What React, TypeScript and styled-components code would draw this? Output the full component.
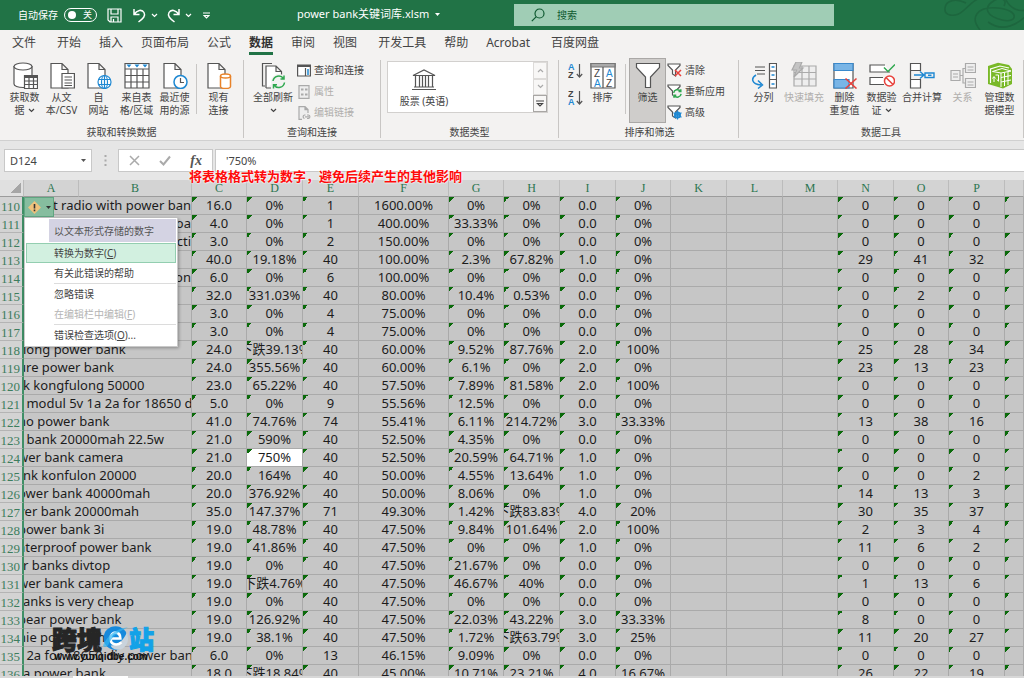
import React from "react";
import styled, { createGlobalStyle, css } from "styled-components";

const Global = createGlobalStyle`
  * { box-sizing: border-box; }
  body { margin: 0; background: #e6e6e6; font-family: "Noto Sans", "Noto Sans CJK SC", sans-serif; }
  button, input { font: inherit; color: inherit; border: 0; margin: 0; padding: 0; background: none; border-radius: 0; outline: none; }
`;

const Window = styled.div`
  height: 100vh;
  display: flex;
  flex-direction: column;
  overflow: hidden;
  color: #444;
  font-size: 10px;
  line-height: 13px;
`;

/* ---------- title bar ---------- */
const TitleBar = styled.header`
  flex: none;
  height: 30px;
  display: grid;
  grid-template-columns: 297px 217px 320px 1fr;
  align-items: center;
  background: #217346;
  color: #fff;
`;
const QuickAccess = styled.div`
  display: flex;
  align-items: center;
  padding-left: 18px;
`;
const Toggle = styled.button`
  width: 33px;
  height: 14px;
  margin: 0 10px 0 6px;
  padding: 0 4px 0 3px;
  display: flex;
  align-items: center;
  justify-content: space-between;
  border: 1px solid #fff;
  border-radius: 7px;
  font-size: 9px;
  line-height: 12px;
`;
const Knob = styled.span`
  width: 8px;
  height: 8px;
  border-radius: 50%;
  background: #fff;
`;
const QuickButton = styled.button<{ $gap?: number }>`
  display: flex;
  margin-right: ${(p) => p.$gap ?? 4}px;
`;
const FileName = styled.button`
  display: flex;
  align-items: center;
  gap: 6px;
  padding-bottom: 2px;
  font-size: 11px;
  line-height: 14px;
  white-space: nowrap;
`;
const Search = styled.label`
  height: 22px;
  display: flex;
  align-items: center;
  gap: 12px;
  padding-left: 17px;
  background: #a0cdb5;
  color: #0f5a31;
  input { flex: 1; min-width: 0; }
  input::placeholder { color: #0f5a31; opacity: 1; }
`;
const Swirl = styled.svg`
  justify-self: end;
  align-self: start;
`;

/* ---------- ribbon ---------- */
const Tabs = styled.nav`
  flex: none;
  height: 30px;
  display: flex;
  gap: 18px;
  padding-left: 12px;
  background: #f3f2f1;
`;
const Tab = styled.button<{ $active?: boolean; $wide?: boolean }>`
  height: 25px;
  padding-top: 1px;
  font-size: 12px;
  line-height: 24px;
  white-space: nowrap;
  border-bottom: 3px solid ${(p) => (p.$active ? "#217346" : "transparent")};
  font-weight: ${(p) => (p.$active ? 700 : 400)};
  color: ${(p) => (p.$active ? "#333" : "#444")};
  margin-right: ${(p) => (p.$wide ? 3 : 0)}px;
`;
const Ribbon = styled.section`
  flex: none;
  height: 81px;
  display: flex;
  background: #f3f2f1;
  border-bottom: 1px solid #d0d0d0;
`;
const Group = styled.div<{ $width?: number; $pad?: number }>`
  flex: ${(p) => (p.$width ? `0 0 ${p.$width}px` : "1 0 0")};
  height: 78px;
  padding-left: ${(p) => p.$pad ?? 6}px;
  display: flex;
  flex-direction: column;
  justify-content: space-between;
  border-right: 1px solid #c8c6c4;
`;
const Tools = styled.div`
  display: flex;
  align-items: flex-start;
`;
const GroupName = styled.div`
  text-align: center;
  margin-left: -6px;
  line-height: 12px;
`;
const BigButton = styled.button<{ $width?: number; $dim?: boolean; $pressed?: boolean }>`
  flex: 0 0 ${(p) => p.$width ?? 37}px;
  display: flex;
  flex-direction: column;
  align-items: center;
  padding-top: 2px;
  white-space: nowrap;
  color: ${(p) => (p.$dim ? "#b0aeac" : "#444")};
  ${(p) =>
    p.$pressed &&
    css`
      height: 65px;
      margin-top: -2px;
      padding-top: 3px;
      background: #cfcdcb;
      border: 1px solid #aaa8a6;
    `}
`;
const LabelLine = styled.span`
  display: flex;
  align-items: center;
  gap: 3px;
  min-height: 13px;
`;
const IconSlot = styled.span`
  display: flex;
  margin-bottom: 2px;
`;
const Rule = styled.div`
  width: 1px;
  height: 50px;
  margin: 4px 3px 0;
  background: #c8c6c4;
`;
const Stack = styled.div<{ $gap?: number }>`
  display: flex;
  flex-direction: column;
  gap: ${(p) => p.$gap ?? 6}px;
  padding: 3px 0 0 1px;
`;
const SmallButton = styled.button<{ $dim?: boolean }>`
  height: 15px;
  display: flex;
  align-items: center;
  gap: 3px;
  white-space: nowrap;
  color: ${(p) => (p.$dim ? "#b0aeac" : "#444")};
`;
const Gallery = styled.div`
  width: 161px;
  height: 52px;
  margin-top: 1px;
  display: flex;
  border: 1px solid #d2d0ce;
  background: #fff;
`;
const GalleryItem = styled.button`
  display: flex;
  flex-direction: column;
  align-items: center;
  gap: 4px;
  width: 72px;
  padding-top: 7px;
`;
const Scroller = styled.div`
  width: 14px;
  margin-left: auto;
  display: grid;
  grid-template-rows: 1fr 1fr 1fr;
`;
const ScrollButton = styled.button<{ $strong?: boolean }>`
  display: grid;
  place-items: center;
  background: #f8f7f6;
  border: 1px solid ${(p) => (p.$strong ? "#a8a6a4" : "#dddbd9")};
`;

/* ---------- formula bar ---------- */
const FormulaBar = styled.div`
  flex: none;
  height: 39px;
  padding: 8px 0 8px 4px;
  display: flex;
  font-size: 11px;
`;
const NameBox = styled.label`
  width: 88px;
  display: flex;
  align-items: center;
  padding: 0 5px;
  background: #fff;
  border: 1px solid #c8c8c8;
  input { flex: 1; min-width: 0; }
`;
const Dots = styled.div`
  width: 26px;
  display: grid;
  place-items: center;
`;
const FormulaActions = styled.div`
  width: 95px;
  display: flex;
  align-items: center;
  justify-content: space-between;
  padding: 0 10px;
  background: #fff;
  border: 1px solid #c8c8c8;
  button { display: flex; }
`;
const FxButton = styled.button`
  font-family: "Liberation Serif", serif;
  font-style: italic;
  font-weight: 700;
  font-size: 14px;
  color: #555;
`;
const FormulaInput = styled.input`
  flex: 1;
  min-width: 0;
  margin-left: 2px;
  padding-left: 10px;
  background: #fff;
  border: 1px solid #c8c8c8;
  border-right: 0;
`;

/* ---------- sheet ---------- */
const SheetArea = styled.main`
  position: relative;
  flex: 1;
  min-height: 0;
  display: flex;
  flex-direction: column;
`;
const SheetView = styled.div`
  flex: 1;
  min-height: 0;
  overflow: hidden;
  background: #c6c6c6;
`;
const Sheet = styled.table`
  width: 100%;
  table-layout: fixed;
  border-collapse: separate;
  border-spacing: 0;
  color: #1c1c1c;
`;
const ColumnHead = styled.th`
  height: 17px;
  padding: 1px 0 0;
  background: #d3d3d3;
  border-right: 1px solid #bcbcbc;
  border-bottom: 1px solid #9c9c9c;
  font: 12px/15px "Liberation Serif", serif;
  color: #2b7550;
`;
const Corner = styled(ColumnHead)`
  background: linear-gradient(135deg, transparent 50%, #a6a6a6 50%) 11px 3px / 10px 10px no-repeat, #e0e0e0;
`;
const RowHead = styled.th`
  height: 18px;
  padding: 3px 2px 0 0;
  text-align: right;
  background: #d3d3d3;
  border-right: 2px solid #3f8f66;
  border-bottom: 1px solid #b4b4b4;
  font: 13px/14px "Liberation Serif", serif;
  color: #3d7d5d;
`;
const Cell = styled.td<{ $flag?: boolean; $selected?: boolean }>`
  height: 18px;
  padding: 0;
  border-right: 1px solid #aaa;
  border-bottom: 1px solid #aaa;
  background: ${(p) => (p.$flag ? "linear-gradient(135deg, #0a6a0a 50%, transparent 50%) 0 0 / 5px 5px no-repeat," : "")}
    ${(p) => (p.$selected ? "#fff" : "#c6c6c6")};
`;
const Value = styled.div`
  height: 17px;
  display: flex;
  justify-content: center;
  overflow: hidden;
  white-space: pre;
  font-size: 13px;
  line-height: 17px;
`;
const Keyword = styled(Value)<{ $end?: boolean; $cut?: boolean }>`
  justify-content: ${(p) => (p.$end ? "flex-end" : "flex-start")};
  text-indent: ${(p) => (p.$cut ? -6 : -1)}px;
`;
const BottomEdge = styled.div`
  flex: none;
  height: 2px;
  padding-left: 73px;
  background: #d8d8d8;
  &::before { content: ""; display: block; width: 55px; height: 2px; background: #fff; }
`;

/* ---------- overlays ---------- */
const Note = styled.p`
  position: absolute;
  left: 189px;
  top: -13px;
  margin: 0;
  z-index: 2;
  font-size: 13px;
  line-height: 18px;
  font-weight: 700;
  color: #ff0a0a;
  white-space: nowrap;
  text-shadow: 0 0 2px #fff, 0 0 2px #fff;
`;
const ErrorFlag = styled.button`
  position: absolute;
  left: 24px;
  top: 17px;
  width: 30px;
  height: 20px;
  display: flex;
  align-items: center;
  justify-content: space-between;
  padding: 0 2px 0 3px;
  background: #86bd9f;
  border: 1px solid #5fa580;
`;
const Menu = styled.div`
  position: absolute;
  left: 24px;
  top: 38px;
  width: 154px;
  padding: 1px;
  background: #fff;
  border: 1px solid #c9c9c9;
  border-top: 0;
  box-shadow: 1px 1px 3px rgba(0, 0, 0, 0.3);
`;
const MenuTitle = styled.div`
  height: 23px;
  margin: 0 0 1px 23px;
  padding-left: 5px;
  line-height: 24px;
  background: #d4d3e3;
  color: #555;
`;
const MenuItem = styled.button<{ $hot?: boolean; $dim?: boolean }>`
  display: block;
  width: 100%;
  height: 20px;
  padding-left: 27px;
  text-align: left;
  border: 1px solid ${(p) => (p.$hot ? "#93ceb0" : "transparent")};
  background: ${(p) => (p.$hot ? "#d2f0e0" : "transparent")};
  color: ${(p) => (p.$dim ? "#b4b4b4" : "#444")};
`;
const MenuRule = styled.div`
  height: 1px;
  margin: 0 0 0 28px;
  background: #dcdcdc;
`;
const Watermark = styled.div`
  position: absolute;
  left: 52px;
  bottom: 15px;
  width: 102px;
  color: #262626;
  pointer-events: none;
`;
const Logo = styled.div`
  display: flex;
  align-items: center;
  height: 26px;
  font: 900 25px/26px "Noto Sans CJK SC", sans-serif;
  -webkit-text-stroke: 1px currentColor;
`;
const LogoEnd = styled.span`
  color: #12a2e8;
`;
const Site = styled.div`
  padding-right: 4px;
  text-align: center;
  font: 700 10px/12px "Liberation Sans", sans-serif;
  color: #111;
`;

/* ---------- drawings ---------- */
type Draw = { children: React.ReactNode; w?: number; h?: number; box?: string; color?: string };
const Icon = ({ children, w = 26, h = 27, box, color = "#555" }: Draw) => (
  <svg width={w} height={h} viewBox={box ?? `0 0 ${w} ${h}`} fill="none" stroke={color} strokeWidth="1.2" aria-hidden="true">
    {children}
  </svg>
);
const Chevron = ({ color = "#444", w = 7 }: { color?: string; w?: number }) => (
  <Icon w={w} h={5} box="0 0 7 5" color={color}><path d="M1 1l2.5 2.5L6 1" /></Icon>
);
const Caret = ({ color = "#555" }: { color?: string }) => (
  <svg width="5" height="3" viewBox="0 0 5 3" aria-hidden="true"><path d="M0 0h5L2.5 3z" fill={color} /></svg>
);
const Page = () => <path d="M2 1.5h11l6 6V26H2zM13 1.5v6h6" fill="#fff" />;

const GetData = () => (
  <Icon>
    <path d="M2 4v18c0 2 4 3.500 9 3.500h9V4" fill="#fff" />
    <ellipse cx="11" cy="4.500" rx="9" ry="3.500" fill="#fff" />
    <path d="M12.500 13.500h13v13h-13z" fill="#fff" />
    <path d="M12.500 14.500h13" strokeWidth="3" />
    <path d="M12.500 19h13M12.500 22.500h13M17 14v12M21.500 14v12" />
  </Icon>
);
const TextFile = () => (
  <Icon><Page /><path d="M13 11.500h12.400V26H13z" fill="#fff" /><path d="M15.500 15h7.500M15.500 18h7.500M15.500 21h7.500M15.500 23.500h7.500" /></Icon>
);
const WebFile = () => (
  <Icon>
    <Page />
    <g stroke="#1e88d2"><circle cx="18.500" cy="20" r="6.500" fill="#fff" /><ellipse cx="18.500" cy="20" rx="3" ry="6.500" /><path d="M12.500 17.500h12M12.500 22.500h12M18.500 13.500v13" /></g>
  </Icon>
);
const RangeIcon = () => (
  <Icon>
    <path d="M1 1.500h24V26H1z" fill="#fff" />
    <path d="M1 7h24M1 13.500h24M1 20h24M7 7v19M13 7v19M19 7v19" />
    <path d="M2.500 2.500h5L5 5.500zM10.500 2.500h5L13 5.500zM18.500 2.500h5L21 5.500z" fill="#1e88d2" stroke="none" />
  </Icon>
);
const RecentIcon = () => (
  <Icon><Page /><circle cx="18.500" cy="20" r="6.500" fill="#fff" stroke="#1e88d2" strokeWidth="1.500" /><path d="M18.500 16v4.500h3.500" /></Icon>
);
const ConnIcon = () => (
  <Icon><Page /><g stroke="#e8832a" strokeWidth="1.500" fill="#fff"><path d="M14.500 14v10.500c0 1.200 2 2 5 2s5-.8 5-2V14" /><ellipse cx="19.500" cy="14" rx="5" ry="2" /></g></Icon>
);
const RefreshArrows = ({ x = 0, y = 0, s = 1 }: { x?: number; y?: number; s?: number }) => (
  <g transform={`translate(${x} ${y}) scale(${s})`} stroke="#2fa84f" strokeWidth={1.5 / s}>
    <path d="M1 6a5.800 5.800 0 0 1 10.500-2.500M12 .5v3.500H8.500M12.500 7.500A5.800 5.800 0 0 1 2 10M1.500 13.500V9.800H5" />
  </g>
);
const RefreshIcon = () => (
  <Icon>
    <path d="M5 24H2.500V1.500H12" />
    <path d="M6 26V4h10l5.500 5.500V15M16 4v5.500h5.500M6 26h5" fill="#fff" />
    <circle cx="19" cy="20" r="8" fill="#f3f2f1" stroke="none" />
    <RefreshArrows x={12} y={13} />
  </Icon>
);
const PaneIcon = () => (
  <Icon w={14} h={13}><path d="M.6 1h12.800v11H.6z" fill="#fff" /><path d="M.6 2h12.800" strokeWidth="2" /><path d="M8.500 4v8" /><path d="M11 5v6" stroke="#1e88d2" strokeWidth="1.500" /></Icon>
);
const PropIcon = () => (
  <Icon w={14} h={14} color="#aaa"><path d="M2 .6h10v12.800H2z" fill="#eee" /><path d="M4 4.500h2.500M8 4.500h2.500M4 9.500h2.500M8 9.500h2.500" strokeWidth="2" /></Icon>
);
const LinkIcon = () => (
  <Icon w={14} h={14} color="#aaa"><path d="M5 13.400H2V.6h6l3 3V7M8 .6v3h3" fill="#eee" /><path d="M7.500 12.500a1.800 1.800 0 0 1 0-3.500h1M10 9h1.500a1.800 1.800 0 0 1 0 3.500H10M8 10.800h4" /></Icon>
);
const BankIcon = () => (
  <Icon w={26} h={22}>
    <path d="M2 6.500L13 1l11 5.500zM1 20.500h24M3 18h20M4.500 7v11M8.500 7v11M11.500 7v11M14.500 7v11M17.500 7v11M21.500 7v11" />
  </Icon>
);
const Letter = styled.text`
  font: 700 9px "Liberation Sans", sans-serif;
  stroke: none;
`;
const SortIcon = ({ up }: { up?: boolean }) => (
  <Icon w={15} h={17}>
    <Letter x="0" y="8" fill={up ? "#444" : "#1e88d2"}>{up ? "Z" : "A"}</Letter>
    <Letter x="0" y="16" fill={up ? "#1e88d2" : "#444"}>{up ? "A" : "Z"}</Letter>
    <path d="M11.500 2v13M8.800 12l2.700 3 2.700-3" />
  </Icon>
);
const BigLetter = styled.text`
  font: 10px "Liberation Sans", sans-serif;
  stroke: none;
`;
const SortDialogIcon = () => (
  <Icon>
    <path d="M1 1.500h24V26H1z" fill="#fff" /><path d="M1 1.500h24v3.500H1z" fill="#aaa" stroke="#777" /><path d="M13 5v21" />
    <BigLetter x="4" y="15" fill="#444">Z</BigLetter><BigLetter x="4" y="25" fill="#1e88d2">A</BigLetter>
    <BigLetter x="16" y="15" fill="#1e88d2">A</BigLetter><BigLetter x="16" y="25" fill="#444">Z</BigLetter>
  </Icon>
);
const FunnelIcon = () => <Icon><path d="M1.500 1.500h23v4L15.500 15v10.500h-5V15l-9-9.500z" fill="#fff" /></Icon>;
const MiniFunnel = ({ children }: { children: React.ReactNode }) => (
  <Icon w={15} h={15}><path d="M1 1h12v1.500L8.500 7v6L5.500 11V7L1 2.500z" fill="#fff" />{children}</Icon>
);
const SplitIcon = () => (
  <Icon><path d="M4 5h10M4 8.500h10M6 12h8" /><path d="M18.500 1.500h7V26h-7zM18.500 9h7M18.500 17.500h7" fill="#fff" /><path d="M20.500 5h3M20.500 13h3M20.500 22h3M5 13c-5 3-5 9 5 10M7 18.500l4.500 4.500-4.500 3.500" stroke="#1e88d2" strokeWidth="1.500" /></Icon>
);
const FlashIcon = () => (
  <Icon color="#aaa"><path d="M3 4h22v20H3zM3 10.500h22M3 17h22M11 4v20M18 4v20" fill="#eee" /><path d="M5 0h6L8.500 6H12L3 15l2.500-7H1z" fill="#c4c4c4" /></Icon>
);
const DedupIcon = () => (
  <Icon><path d="M2 1.500h19V26H2z" fill="#fff" /><path d="M2 1.500h19v7H2zM2 17.500h15V26H2z" fill="#79b5e6" stroke="#3989cc" /><path d="M13.500 16.500l11 10M24.500 16.500l-11 10" stroke="#e8413c" strokeWidth="1.600" /></Icon>
);
const ValidIcon = () => (
  <Icon><path d="M16 3H1v7h20M14 15.500H1v7h14" fill="#fff" /><path d="M15 5.500l4 4 7-7" stroke="#2fa84f" strokeWidth="1.500" /><circle cx="20.500" cy="19" r="5" fill="#fff" stroke="#e8413c" strokeWidth="1.500" /><path d="M17 15.500l7 7" stroke="#e8413c" strokeWidth="1.500" /></Icon>
);
const MergeIcon = () => (
  <Icon><path d="M1.500 1.500h10v7h-10zM1.500 17.500h10V26h-10zM1.500 8v10" fill="#fff" /><path d="M16 11h9v4.500h-9zM5 13h9.500M11 9.500l4 3.500-4 3.500M19 13.200h3.500" stroke="#1e88d2" strokeWidth="1.400" /></Icon>
);
const RelationIcon = () => (
  <Icon color="#aaa"><path d="M1 8.500h9v10H1zM15.500 1.500h10v9h-10zM15.500 16.500h10v9h-10z" fill="#eee" /><path d="M10 13.500h3v-7h2.500M13 13.500v7.500h2.500M3 12h5M3 15h5M17.500 5h6M17.500 8h6M17.500 20h6M17.500 23h6" /></Icon>
);
const ModelIcon = () => (
  <Icon>
    <path d="M1 4L11 .8 22 3l3 4v15l-9 4.500L1 22z" fill="#79b928" stroke="none" />
    <path d="M3.500 21V7L13 4l9 2" stroke="#fff" />
    <path d="M5.500 9.500L14 11v14M5.500 9.500L15 6.500l9 2.500M14 11l10-2M14 15.500l10-2M14 20l10-2M17.500 10.500V24M21 10v13" stroke="#fff" strokeWidth="1" />
    <path d="M7 20v-5M5.500 16.500L7 14.500l1.500 2M8.500 13h3v6M10 17.500l1.500 2" stroke="#fff" strokeWidth="1" />
  </Icon>
);

/* ---------- data ---------- */
const columnWidths = [24, 55, 113, 55, 56, 56, 90, 55, 56, 56, 55, 56, 56, 55, 56, 55, 56];
const letters = "ABCDEFGHIJKLMNOP".split("");
type Row = { key: string; end?: boolean; cut?: boolean; values: string };
const rows: Row[] = [
  { key: "rt radio with power ban", end: true, values: "16.0|0%|1|1600.00%|0%|0%|0.0|0%||||0|0|0|" },
  { key: "boa", end: true, values: "4.0|0%|1|400.00%|33.33%|0%|0.0|0%||||0|0|0|" },
  { key: "cti", end: true, values: "3.0|0%|2|150.00%|0%|0%|0.0|0%||||0|0|0|" },
  { key: "", values: "40.0|19.18%|40|100.00%|2.3%|67.82%|1.0|0%||||29|41|32|" },
  { key: "on", end: true, values: "6.0|0%|6|100.00%|0%|0%|0.0|0%||||0|0|0|" },
  { key: "", values: "32.0|331.03%|40|80.00%|10.4%|0.53%|0.0|0%||||0|2|0|" },
  { key: "", values: "3.0|0%|4|75.00%|0%|0%|0.0|0%||||0|0|0|" },
  { key: "", values: "3.0|0%|4|75.00%|0%|0%|0.0|0%||||0|0|0|" },
  { key: "long power bank", values: "24.0|下跌39.13%|40|60.00%|9.52%|87.76%|2.0|100%||||25|28|34|" },
  { key: "ure power bank", cut: true, values: "24.0|355.56%|40|60.00%|6.1%|0%|2.0|0%||||23|13|23|" },
  { key: "k kongfulong 50000", values: "23.0|65.22%|40|57.50%|7.89%|81.58%|2.0|100%||||0|0|0|" },
  { key: " modul 5v 1a 2a for 18650 d", values: "5.0|0%|9|55.56%|12.5%|0%|0.0|0%||||0|0|0|" },
  { key: "no power bank", cut: true, values: "41.0|74.76%|74|55.41%|6.11%|214.72%|3.0|33.33%||||13|38|16|" },
  { key: " bank 20000mah 22.5w", values: "21.0|590%|40|52.50%|4.35%|0%|0.0|0%||||0|0|0|" },
  { key: "wer bank camera", cut: true, values: "21.0|750%|40|52.50%|20.59%|64.71%|1.0|0%||||0|0|0|" },
  { key: "nk konfulon 20000", values: "20.0|164%|40|50.00%|4.55%|13.64%|1.0|0%||||0|0|2|" },
  { key: "ower bank 40000mah", cut: true, values: "20.0|376.92%|40|50.00%|8.06%|0%|1.0|0%||||14|13|3|" },
  { key: "ver bank 20000mah", cut: true, values: "35.0|147.37%|71|49.30%|1.42%|下跌83.83%|4.0|20%||||30|35|37|" },
  { key: "power bank 3i", cut: true, values: "19.0|48.78%|40|47.50%|9.84%|101.64%|2.0|100%||||2|3|4|" },
  { key: "aterproof power bank", cut: true, values: "19.0|41.86%|40|47.50%|0%|0%|1.0|0%||||11|6|2|" },
  { key: "r banks divtop", values: "19.0|0%|40|47.50%|21.67%|0%|0.0|0%||||0|0|0|" },
  { key: "wer bank camera", cut: true, values: "19.0|下跌4.76%|40|47.50%|46.67%|40%|0.0|0%||||1|13|6|" },
  { key: "anks is very cheap", values: "19.0|0%|40|47.50%|0%|0%|0.0|0%||||0|0|0|" },
  { key: "bear power bank", cut: true, values: "19.0|126.92%|40|47.50%|22.03%|43.22%|3.0|33.33%||||8|0|0|" },
  { key: "nie power bank", cut: true, values: "19.0|38.1%|40|47.50%|1.72%|下跌63.79%|3.0|25%||||11|20|27|" },
  { key: " 2a for 18650 diy power ban", values: "6.0|0%|13|46.15%|9.09%|0%|0.0|0%||||0|0|0|" },
  { key: "a power bank", values: "18.0|下跌18.84%|40|45.00%|10.71%|23.21%|4.0|16.67%||||26|22|19|" },
];
const plainColumns = [3, 8, 9, 10];
const tabs = ["文件", "开始", "插入", "页面布局", "公式", "数据", "审阅", "视图", "开发工具", "帮助", "Acrobat", "百度网盘"];
const wideTabs = ["文件", "视图", "Acrobat"];

type ToolProps = { icon: React.ReactNode; a: string; b?: string; arrow?: boolean; width?: number; dim?: boolean; pressed?: boolean };
const Tool = ({ icon, a, b, arrow, width, dim, pressed }: ToolProps) => (
  <BigButton $width={width} $dim={dim} $pressed={pressed}>
    <IconSlot>{icon}</IconSlot>
    <LabelLine>{a}</LabelLine>
    <LabelLine>{b}{arrow && <Chevron />}</LabelLine>
  </BigButton>
);

export default function App() {
  return (
    <Window>
      <Global />
      <TitleBar>
        <QuickAccess>
          自动保存
          <Toggle aria-label="自动保存"><Knob />关</Toggle>
          <QuickButton aria-label="保存" $gap={10}>
            <Icon w={15} h={15} color="#fff"><path d="M1 1h13v13H3L1 12zM4 1v5h7V1M4 14V9h7v5M6.500 14v-3" /></Icon>
          </QuickButton>
          <QuickButton aria-label="撤消"><Icon w={15} h={15} color="#fff"><path d="M2 1v5.500h5.500M2 6.500C5 2 10 1 12 4.500s-1 6-5.500 9.500" strokeWidth="1.500" /></Icon></QuickButton>
          <QuickButton aria-label="撤消选项" $gap={8}><Chevron color="#fff" /></QuickButton>
          <QuickButton aria-label="恢复"><Icon w={15} h={15} color="#fff"><path d="M13 1v5.500H7.500M13 6.500C10 2 5 1 3 4.500s1 6 5.500 9.500" strokeWidth="1.500" /></Icon></QuickButton>
          <QuickButton aria-label="恢复选项" $gap={11}><Chevron color="#fff" /></QuickButton>
          <QuickButton aria-label="自定义"><Icon w={7} h={7} color="#fff"><path d="M0 1h7M1 3.500h5L3.500 6z" /></Icon></QuickButton>
        </QuickAccess>
        <FileName>power bank关键词库.xlsm<Caret color="#fff" /></FileName>
        <Search>
          <Icon w={14} h={14} color="#0f5a31"><circle cx="8.500" cy="5.500" r="4.500" /><path d="M5.300 8.700L.8 13.200" /></Icon>
          <input placeholder="搜索" aria-label="搜索" />
        </Search>
        <Swirl width="82" height="30" viewBox="0 0 82 30" fill="none" stroke="#1d663e" strokeWidth="1.600" aria-hidden="true">
          <path d="M24 3C14-2 4 0 3 8s10 10 18 3S34-2 42-3M38 30C28 18 34 6 56 8s20 16 4 12S42 8 50 2s16-3 12 4M46 22c14 10 28 4 40-8M64 0c4 8 12 12 20 10" />
        </Swirl>
      </TitleBar>

      <Tabs>
        {tabs.map((t) => (
          <Tab key={t} $active={t === "数据"} $wide={wideTabs.includes(t)}>{t}</Tab>
        ))}
      </Tabs>

      <Ribbon>
        <Group $width={244}>
          <Tools>
            <Tool icon={<GetData />} a="获取数" b="据" arrow />
            <Tool icon={<TextFile />} a="从文" b="本/CSV" />
            <Tool icon={<WebFile />} a="自" b="网站" />
            <Tool icon={<RangeIcon />} a="来自表" b="格/区域" width={39} />
            <Tool icon={<RecentIcon />} a="最近使" b="用的源" />
            <Rule />
            <Tool icon={<ConnIcon />} a="现有" b="连接" />
          </Tools>
          <GroupName>获取和转换数据</GroupName>
        </Group>
        <Group $width={137}>
          <Tools>
            <Tool icon={<RefreshIcon />} a="全部刷新" arrow width={46} />
            <Stack>
              <SmallButton><PaneIcon />查询和连接</SmallButton>
              <SmallButton $dim><PropIcon />属性</SmallButton>
              <SmallButton $dim><LinkIcon />编辑链接</SmallButton>
            </Stack>
          </Tools>
          <GroupName>查询和连接</GroupName>
        </Group>
        <Group $width={178}>
          <Gallery>
            <GalleryItem><BankIcon />股票 (英语)</GalleryItem>
            <Scroller>
              <ScrollButton aria-label="上一行"><Icon w={7} h={5} color="#aaa"><path d="M1 4l2.500-2.500L6 4" /></Icon></ScrollButton>
              <ScrollButton aria-label="下一行"><Chevron color="#aaa" /></ScrollButton>
              <ScrollButton aria-label="更多" $strong><Icon w={8} h={7} color="#444"><path d="M0 1h8M1.500 3.500h5L4 6z" /></Icon></ScrollButton>
            </Scroller>
          </Gallery>
          <GroupName>数据类型</GroupName>
        </Group>
        <Group $width={180} $pad={8}>
          <Tools>
            <Stack $gap={12}>
              <SmallButton aria-label="升序"><SortIcon /></SmallButton>
              <SmallButton aria-label="降序"><SortIcon up /></SmallButton>
            </Stack>
            <Tool icon={<SortDialogIcon />} a="排序" width={39} />
            <Rule />
            <Tool icon={<FunnelIcon />} a="筛选" pressed />
            <Stack>
              <SmallButton><MiniFunnel><path d="M8 7l6 6M14 7l-6 6" stroke="#e8413c" strokeWidth="1.500" /></MiniFunnel>清除</SmallButton>
              <SmallButton><MiniFunnel><circle cx="10.500" cy="10" r="4.500" fill="#f3f2f1" stroke="none" /><RefreshArrows x={6} y={5} s={0.65} /></MiniFunnel>重新应用</SmallButton>
              <SmallButton><MiniFunnel><circle cx="10.500" cy="10" r="2.500" fill="#fff" stroke="#1e88d2" strokeWidth="2" /><path d="M10.500 5.500v9M6.500 7.800l8 4.400M14.500 7.800l-8 4.400" stroke="#1e88d2" /></MiniFunnel>高级</SmallButton>
            </Stack>
          </Tools>
          <GroupName>排序和筛选</GroupName>
        </Group>
        <Group>
          <Tools>
            <Tool icon={<SplitIcon />} a="分列" />
            <Tool icon={<FlashIcon />} a="快速填充" dim width={44} />
            <Tool icon={<DedupIcon />} a="删除" b="重复值" />
            <Tool icon={<ValidIcon />} a="数据验" b="证" arrow />
            <Tool icon={<MergeIcon />} a="合并计算" width={44} />
            <Tool icon={<RelationIcon />} a="关系" dim />
            <Tool icon={<ModelIcon />} a="管理数" b="据模型" />
          </Tools>
          <GroupName>数据工具</GroupName>
        </Group>
      </Ribbon>

      <FormulaBar>
        <NameBox><input defaultValue="D124" aria-label="名称框" /><Caret /></NameBox>
        <Dots><Icon w={3} h={13} color="#aaa"><path d="M1.500 1v2M1.500 5.500v2M1.500 10v2" strokeWidth="2" /></Icon></Dots>
        <FormulaActions>
          <button aria-label="取消"><Icon w={11} h={11} color="#aaa"><path d="M1 1l9 9M10 1l-9 9" strokeWidth="1.500" /></Icon></button>
          <button aria-label="输入"><Icon w={12} h={11} color="#aaa"><path d="M1 6l3.500 3.500L11 1.500" strokeWidth="2" /></Icon></button>
          <FxButton>fx</FxButton>
        </FormulaActions>
        <FormulaInput defaultValue="'750%" aria-label="编辑栏" />
      </FormulaBar>

      <SheetArea>
        <SheetView>
          <Sheet>
            <colgroup>
              {columnWidths.map((w, i) => <col key={i} width={w} />)}
              <col />
            </colgroup>
            <thead>
              <tr>
                <Corner />
                {letters.map((l) => <ColumnHead key={l}>{l}</ColumnHead>)}
                <ColumnHead />
              </tr>
            </thead>
            <tbody>
              {rows.map((row, r) => (
                <tr key={r}>
                  <RowHead>{110 + r}</RowHead>
                  <Cell colSpan={2}><Keyword $end={row.end} $cut={row.cut}>{row.key}</Keyword></Cell>
                  {row.values.split("|").map((v, c) => (
                    <Cell key={c} $flag={!plainColumns.includes(c)} $selected={r === 14 && c === 1}>
                      <Value>{v}</Value>
                    </Cell>
                  ))}
                </tr>
              ))}
            </tbody>
          </Sheet>
        </SheetView>
        <BottomEdge />

        <Note>将表格格式转为数字，避免后续产生的其他影响</Note>
        <ErrorFlag aria-label="错误检查选项">
          <svg width="13" height="13" viewBox="0 0 13 13" aria-hidden="true">
            <path d="M6.500 0L13 6.500 6.500 13 0 6.500z" fill="#efc27c" />
            <path d="M6.500 3v4.500M6.500 8.500v1.800" stroke="#333" strokeWidth="1.600" />
          </svg>
          <Caret color="#333" />
        </ErrorFlag>
        <Menu>
          <MenuTitle>以文本形式存储的数字</MenuTitle>
          <MenuItem $hot>转换为数字(<u>C</u>)</MenuItem>
          <MenuItem>有关此错误的帮助</MenuItem>
          <MenuRule />
          <MenuItem>忽略错误</MenuItem>
          <MenuItem $dim>在编辑栏中编辑(<u>F</u>)</MenuItem>
          <MenuRule />
          <MenuItem>错误检查选项(<u>O</u>)...</MenuItem>
        </Menu>
        <Watermark>
          <Logo>
            跨境
            <svg width="27" height="26" viewBox="0 0 25 24" aria-hidden="true">
              <circle cx="12.500" cy="12" r="11" fill="#1689dc" />
              <path d="M8 19c7 0 12-5 15-12 3 7 0 14-7 16-4 0-7-1-8-4z" fill="#c9d3dc" />
              <path d="M8 12.500h9c0-4-2-5.500-4.500-5.500S8 9 8 12.500s2 5.500 5 5.500 4-1 5-2" fill="none" stroke="#fff" strokeWidth="2.400" />
              <path d="M1 19C5 9 14 3 24 2 15 6 9 11 6 18c-2 3-4 3-5 1z" fill="#35b6f2" fillOpacity=".7" />
            </svg>
            <LogoEnd>站</LogoEnd>
          </Logo>
          <Site>www.yunqidbe.com</Site>
        </Watermark>
      </SheetArea>
    </Window>
  );
}
